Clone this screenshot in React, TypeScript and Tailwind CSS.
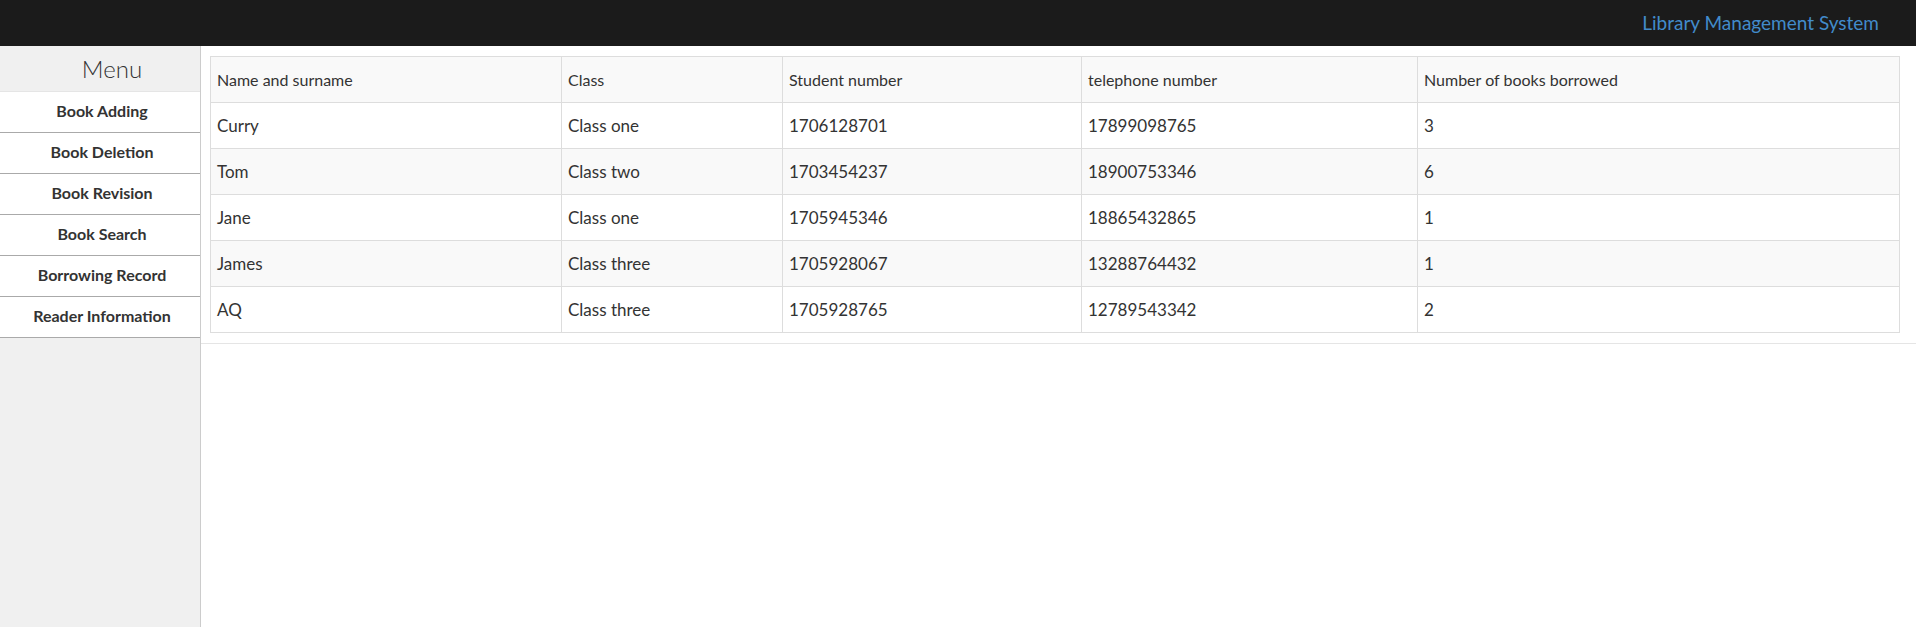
import React from "react";

const menuItems = [
  "Book Adding",
  "Book Deletion",
  "Book Revision",
  "Book Search",
  "Borrowing Record",
  "Reader Information",
];

const headers = [
  "Name and surname",
  "Class",
  "Student number",
  "telephone number",
  "Number of books borrowed",
];

const readers = [
  ["Curry", "Class one", "1706128701", "17899098765", "3"],
  ["Tom", "Class two", "1703454237", "18900753346", "6"],
  ["Jane", "Class one", "1705945346", "18865432865", "1"],
  ["James", "Class three", "1705928067", "13288764432", "1"],
  ["AQ", "Class three", "1705928765", "12789543342", "2"],
];

export default function App() {
  return (
    <div className="h-[627px] overflow-hidden flex flex-col bg-white text-[#333] font-['Lato','Open_Sans',sans-serif]">
      {/* Top bar */}
      <header className="h-[46px] shrink-0 bg-[#1b1b1b] flex items-center justify-end pr-[37px]">
        <span className="text-[19px] text-[#428bca]">Library Management System</span>
      </header>

      <div className="flex flex-1 min-h-0">
        {/* Sidebar */}
        <aside className="w-[201px] shrink-0 bg-[#f0f0f0] border-r border-[#ccc]">
          <div className="h-[46px] border-b border-[#e5e5e5] flex items-center justify-center pl-6 text-[24px] font-light">
            Menu
          </div>
          {menuItems.map((item) => (
            <div
              key={item}
              className="h-[41px] bg-white border-b border-[#aaa] flex items-center justify-center pl-1 pb-[2px] text-[16px] font-bold cursor-pointer"
            >
              {item}
            </div>
          ))}
        </aside>

        {/* Content */}
        <main className="flex-1 min-w-0">
          <div className="pt-[10px] pb-[10px] pl-[9px] pr-[16px] border-b border-[#e5e5e5]">
            <table className="w-full table-fixed border-collapse border border-[#ddd] text-[17px]">
              <colgroup>
                <col className="w-[351px]" />
                <col className="w-[221px]" />
                <col className="w-[299px]" />
                <col className="w-[336px]" />
                <col />
              </colgroup>
              <thead>
                <tr className="h-[46px] bg-[#f9f9f9]">
                  {headers.map((h) => (
                    <th key={h} className="border border-[#ddd] pl-[6px] text-left font-normal text-[16px]">
                      {h}
                    </th>
                  ))}
                </tr>
              </thead>
              <tbody>
                {readers.map((row, i) => (
                  <tr key={row[2]} className={i % 2 === 1 ? "h-[46px] bg-[#f9f9f9]" : "h-[46px] bg-white"}>
                    {row.map((cell, j) => (
                      <td key={j} className="border border-[#ddd] pl-[6px]">
                        {cell}
                      </td>
                    ))}
                  </tr>
                ))}
              </tbody>
            </table>
          </div>
        </main>
      </div>
    </div>
  );
}
